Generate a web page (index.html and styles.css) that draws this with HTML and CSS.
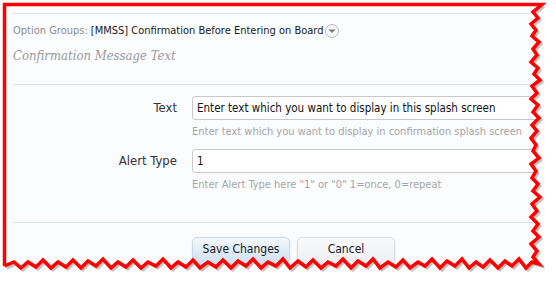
FILE: index.html
```html
<!DOCTYPE html>
<html lang="en">
<head>
    <meta charset="UTF-8">
    <title>Option Groups</title>
    <link rel="stylesheet" href="styles.css">
</head>
<body>
    <div class="panel">
        <div class="rule"></div>
        <div class="group-line">
            <span class="muted">Option Groups:</span>
            <span class="group-name">[MMSS] Confirmation Before Entering on Board</span>
            <span class="drop-icon">
                <svg width="14" height="14" viewBox="0 0 14 14">
                    <circle cx="7" cy="7" r="6.5" fill="#f7f7f7" stroke="#b9b9b9"/>
                    <path d="M3.5 5.5 L10.5 5.5 L7 9 Z" fill="#7a7a7a"/>
                </svg>
            </span>
        </div>
        <h2 class="section-title">Confirmation Message Text</h2>
        <div class="rule"></div>

        <form class="fields">
            <div class="field">
                <label class="label" for="text">Text</label>
                <div class="control">
                    <input class="input" id="text" type="text" value="Enter text which you want to display in this splash screen">
                    <p class="hint">Enter text which you want to display in confirmation splash screen</p>
                </div>
            </div>
            <div class="field">
                <label class="label" for="alert">Alert Type</label>
                <div class="control">
                    <input class="input" id="alert" type="text" value="1">
                    <p class="hint">Enter Alert Type here "1" or "0" 1=once, 0=repeat</p>
                </div>
            </div>
        </form>

        <div class="rule rule-bottom"></div>
        <div class="actions">
            <button class="btn btn-primary" type="button">Save Changes</button>
            <button class="btn" type="button">Cancel</button>
        </div>
    </div>

    <!-- torn paper edge drawn over the screenshot -->
    <svg class="torn" width="556" height="283" viewBox="0 0 556 283">
        <path fill="#ffffff" fill-rule="evenodd" d="M0 0 H556 V283 H0 Z M4.5 4.5 L542 4.5 L533 12 L538 18 L531 24 L536 30 L532 36 L539 42 L533 49 L537 55 L531 62 L538 68 L534 74 L540 80 L532 86 L537 93 L531 99 L538 105 L533 112 L539 118 L532 125 L537 131 L531 138 L536 145 L533 151 L539 158 L531 164 L536 171 L532 178 L538 184 L533 191 L540 197 L532 204 L537 211 L531 217 L538 224 L533 231 L539 237 L531 244 L537 251 L533 257 L539 264 L532 262 L526 268 L519 259 L512 266 L505 261 L498 268 L490 260 L483 267 L476 262 L469 268 L462 259 L455 266 L447 261 L440 268 L432 259 L425 266 L418 262 L410 268 L403 260 L396 267 L388 262 L380 268 L373 259 L366 266 L358 261 L351 268 L343 259 L336 266 L328 262 L321 268 L313 260 L306 267 L298 261 L290 268 L283 259 L276 266 L268 262 L261 268 L253 259 L246 266 L238 261 L231 268 L223 260 L216 267 L208 262 L200 268 L193 260 L186 267 L178 262 L171 268 L163 259 L156 266 L148 262 L141 268 L133 260 L126 267 L118 262 L111 268 L103 259 L96 266 L88 261 L81 268 L73 260 L66 267 L58 262 L51 268 L43 260 L36 267 L28 262 L21 268 L14 262 L4.5 266 Z"/>
        <path class="torn-shadow" d="M542 4.5 L533 12 L538 18 L531 24 L536 30 L532 36 L539 42 L533 49 L537 55 L531 62 L538 68 L534 74 L540 80 L532 86 L537 93 L531 99 L538 105 L533 112 L539 118 L532 125 L537 131 L531 138 L536 145 L533 151 L539 158 L531 164 L536 171 L532 178 L538 184 L533 191 L540 197 L532 204 L537 211 L531 217 L538 224 L533 231 L539 237 L531 244 L537 251 L533 257 L539 264 L532 262 L526 268 L519 259 L512 266 L505 261 L498 268 L490 260 L483 267 L476 262 L469 268 L462 259 L455 266 L447 261 L440 268 L432 259 L425 266 L418 262 L410 268 L403 260 L396 267 L388 262 L380 268 L373 259 L366 266 L358 261 L351 268 L343 259 L336 266 L328 262 L321 268 L313 260 L306 267 L298 261 L290 268 L283 259 L276 266 L268 262 L261 268 L253 259 L246 266 L238 261 L231 268 L223 260 L216 267 L208 262 L200 268 L193 260 L186 267 L178 262 L171 268 L163 259 L156 266 L148 262 L141 268 L133 260 L126 267 L118 262 L111 268 L103 259 L96 266 L88 261 L81 268 L73 260 L66 267 L58 262 L51 268 L43 260 L36 267 L28 262 L21 268 L14 262 L4.5 266"/>
        <path class="torn-line" d="M4.5 266 L4.5 4.5 L542 4.5 L533 12 L538 18 L531 24 L536 30 L532 36 L539 42 L533 49 L537 55 L531 62 L538 68 L534 74 L540 80 L532 86 L537 93 L531 99 L538 105 L533 112 L539 118 L532 125 L537 131 L531 138 L536 145 L533 151 L539 158 L531 164 L536 171 L532 178 L538 184 L533 191 L540 197 L532 204 L537 211 L531 217 L538 224 L533 231 L539 237 L531 244 L537 251 L533 257 L539 264 L532 262 L526 268 L519 259 L512 266 L505 261 L498 268 L490 260 L483 267 L476 262 L469 268 L462 259 L455 266 L447 261 L440 268 L432 259 L425 266 L418 262 L410 268 L403 260 L396 267 L388 262 L380 268 L373 259 L366 266 L358 261 L351 268 L343 259 L336 266 L328 262 L321 268 L313 260 L306 267 L298 261 L290 268 L283 259 L276 266 L268 262 L261 268 L253 259 L246 266 L238 261 L231 268 L223 260 L216 267 L208 262 L200 268 L193 260 L186 267 L178 262 L171 268 L163 259 L156 266 L148 262 L141 268 L133 260 L126 267 L118 262 L111 268 L103 259 L96 266 L88 261 L81 268 L73 260 L66 267 L58 262 L51 268 L43 260 L36 267 L28 262 L21 268 L14 262 L4.5 266"/>
    </svg>
</body>
</html>
```

FILE: styles.css
```css
body {
    margin: 0;
    width: 556px;
    height: 283px;
    overflow: hidden;
    background-color: #fbfcfe;
    font-family: "DejaVu Sans Condensed", "DejaVu Sans", sans-serif;
    font-stretch: condensed;
    font-size: 11px;
    color: #222;
    position: relative;
}
.panel {
    padding: 13px 0 0 13px;
    width: 540px;
}
.rule {
    height: 1px;
    background-color: #d9e7f4;
}
.group-line {
    margin-top: 9px;
    height: 16px;
    line-height: 16px;
    display: flex;
    align-items: center;
    gap: 3px;
}
.muted {
    color: #8c8c8c;
}
.group-name {
    color: #1a1a1a;
}
.drop-icon {
    display: flex;
    margin-left: -1px;
}
.section-title {
    margin: 7px 0 18px;
    font-family: "DejaVu Serif", "Liberation Serif", serif;
    font-style: italic;
    font-weight: normal;
    font-size: 13px;
    line-height: 20px;
    color: #9a9a9a;
}
.fields {
    margin: 11px 0 0;
    display: flex;
    flex-direction: column;
    gap: 9px;
}
.field {
    display: grid;
    grid-template-columns: 164px 1fr;
    column-gap: 15px;
}
.label {
    text-align: right;
    font-size: 13px;
    color: #333;
    line-height: 24px;
}
.input {
    display: block;
    box-sizing: border-box;
    width: 100%;
    height: 24px;
    margin: 0;
    padding: 0 4px;
    border: 1px solid #c9c9c9;
    border-radius: 3px;
    background-color: #fff;
    font-family: inherit;
    font-stretch: condensed;
    font-size: 11.5px;
    color: #111;
}
.hint {
    margin: 4px 0 0;
    line-height: 16px;
    font-size: 11px;
    color: #a5a5a5;
}
.rule-bottom {
    margin-top: 29px;
}
.actions {
    margin-top: 14px;
    padding-left: 179px;
    display: flex;
    gap: 7px;
}
.btn {
    width: 98px;
    height: 28px;
    border: 1px solid #d9dde3;
    border-radius: 5px;
    background: linear-gradient(#fafafc, #eceef3);
    box-shadow: 0 1px 2px rgba(0,0,0,0.12);
    font-family: inherit;
    font-stretch: condensed;
    font-size: 12px;
    color: #1a1a1a;
    padding: 0 0 4px;
}
.btn-primary {
    background: linear-gradient(#f3f7fb, #cde0f0);
    border-color: #c9d9e8;
}
.torn {
    position: absolute;
    left: 0;
    top: 0;
    pointer-events: none;
}
.torn-shadow {
    fill: none;
    stroke: #9a9a9a;
    stroke-width: 3;
    stroke-opacity: 0.6;
    transform: translate(2px, 2px);
}
.torn-line {
    fill: none;
    stroke: #ff0000;
    stroke-width: 3.5;
    stroke-linejoin: miter;
}
```
